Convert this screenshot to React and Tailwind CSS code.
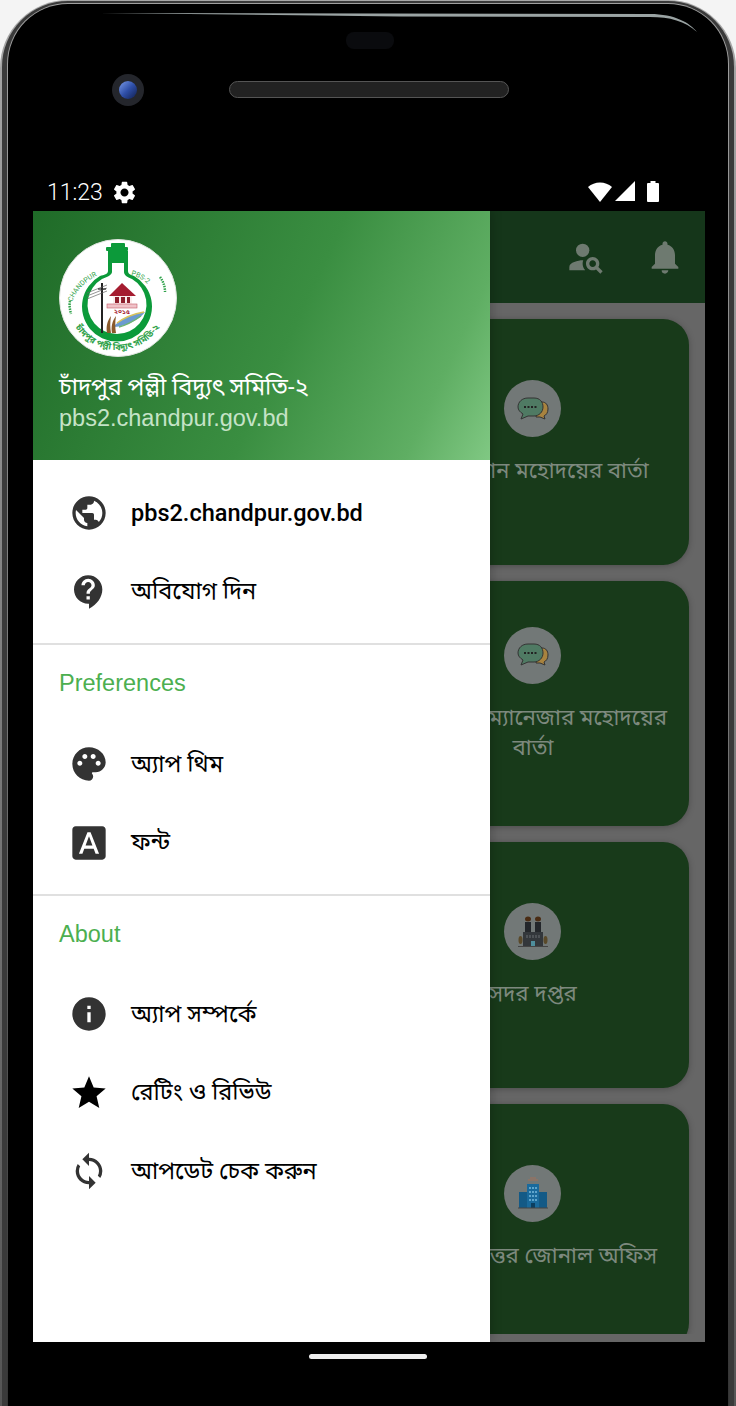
import { MdPublic, MdContactSupport, MdPalette, MdFontDownload, MdInfo, MdStar, MdSync, MdPersonSearch, MdNotifications, MdSettings } from "react-icons/md"

const font = "font-['Roboto','Noto_Sans','Noto_Sans_Bengali','Lohit_Bengali','FreeSerif',sans-serif]"

function Logo() {
    return (
        <svg viewBox="0 0 118 118" className="w-[118px] h-[118px] shrink-0">
            <circle cx="59" cy="59" r="58.5" fill="#fff" stroke="#dfe5df" strokeWidth="1" />
            <path id="logoL" d="M13 63 Q21 42 47 33" fill="none" />
            <path id="logoR" d="M72 36 Q86 39 95 53" fill="none" />
            <path id="logoB" d="M14 84 A50 50 0 0 0 103 84" fill="none" />
            {/* bulb */}
            <rect x="52" y="4" width="14" height="5" rx="1" fill="#0c9a3a" />
            <rect x="47" y="8" width="22" height="4" rx="1" fill="#0c9a3a" />
            <path d="M49 12h20v20c0 3 3 4 6 5a35 35 0 1 1-34 0c4-1 8-2 8-5z" fill="#0c9a3a" />
            <path d="M53 24h12v9c0 3 3 5 8 7a29.500 29.500 0 1 1-30 0c5-2 10-4 10-7z" fill="#fff" />
            {/* house */}
            <path d="M50 57 63 44 77 57z" fill="#a51c30" />
            <rect x="54" y="57" width="19" height="8" fill="#fbeeee" />
            <rect x="56" y="58" width="4" height="6" fill="#8e1e2c" />
            <rect x="62" y="58" width="4" height="6" fill="#8e1e2c" />
            <rect x="68" y="58" width="3" height="6" fill="#8e1e2c" />
            <rect x="48" y="65" width="30" height="4" fill="#f0c2c8" stroke="#c25a68" strokeWidth="0.6" />
            <text x="63" y="75" textAnchor="middle" fontSize="6.500" fontWeight="700" fill="#a51c30">২০১৫</text>
            {/* river and boat */}
            <path d="M54 88c6-7 18-13 32-15-2 3-5 5-8 7-6 4-14 8-24 8z" fill="#6a9ad0" />
            <path d="M58 84c8-6 16-9 27-11" stroke="#d9c35a" strokeWidth="1.500" fill="none" />
            <path d="M60 88c8-2 15-6 22-11" stroke="#6fb56f" strokeWidth="1.500" fill="none" />
            <path d="M53 94c-1-6 0-12 4-17-1 6-1 12 0 17z" fill="#8a5a2b" />
            <path d="M48 94c-1-6 0-12 4-17-1 6-1 12 0 17z" fill="#8a5a2b" />
            {/* pole and wires */}
            <rect x="42" y="44" width="2" height="50" fill="#222" />
            <path d="M28 54 48 46M28 57 48 49M28 60 48 52" stroke="#666" strokeWidth="0.700" />
            <path d="M39 50h8" stroke="#222" strokeWidth="1.200" />
            {/* ring lettering */}
            <text fontSize="7" fill="#2fa24a" fontFamily="Roboto"><textPath href="#logoL">CHANDPUR</textPath></text>
            <text fontSize="7" fill="#2fa24a" fontFamily="Roboto"><textPath href="#logoR">PBS-2</textPath></text>
            <text fontSize="9" fontWeight="700" fill="#2fa24a"><textPath href="#logoB" startOffset="5">চাঁদপুর পল্লী বিদ্যুৎ সমিতি-২</textPath></text>
            <path d="M11 62c-1 4 0 9 1 13" stroke="#2fa24a" strokeWidth="2.500" strokeDasharray="1.500 1" fill="none" />
            <path d="M101 38c3 4 5 9 5 15" stroke="#2fa24a" strokeWidth="2.500" strokeDasharray="1.500 1" fill="none" />
        </svg>
    )
}

function MenuItem({ icon, text, strong, dark }) {
    const Icon = icon
    return (
        <div className="flex items-center h-[78.5px] pl-[36px]">
            <Icon size={40} className={dark ? "text-black" : "text-[#333333]"} />
            <div className={`ml-[22px] text-[23.5px] text-black ${strong ? "font-medium" : ""}`}>{text}</div>
        </div>
    )
}

function SectionLabel({ text }) {
    return <div className="h-[57px] pl-[26px] flex items-center pt-[21px] text-[23.5px] leading-none text-[#4caf50] font-['Liberation_Sans']">{text}</div>
}

function Card({ two, children, icon }) {
    return (
        <div className={`h-[245.5px] w-[312px] shrink-0 rounded-[26px] bg-[#183a1a] flex flex-col items-center shadow-[0_1px_6px_rgba(0,0,0,0.25)] ${two ? "pt-[46px]" : "pt-[61px]"}`}>
            <div className="w-[57px] h-[57px] rounded-full bg-[#727877] flex items-center justify-center -ml-[1px]">{icon}</div>
            <div className="mt-[18px] text-[22.3px] leading-[30px] text-center text-[#7d897e]">{children}</div>
        </div>
    )
}

const chat = (
    <svg viewBox="0 0 32 24" className="w-[32px] h-[24px]">
        <path d="M20 5h5c4 0 6 3 6 7s-2 6-4 7l1 3-5-2h-4z" fill="#a8833f" stroke="#333" />
        <path d="M11 1h6c6 0 9 4 9 9s-4 9-9 9h-6l-7 3 2-5c-3-2-5-4-5-7 0-5 4-9 10-9z" fill="#4f7a63" stroke="#333" />
        <path d="M7 10h13" stroke="#222" strokeWidth="2" strokeDasharray="2 1.500" />
    </svg>
)

const hq = (
    <svg viewBox="0 0 30 32" className="w-[30px] h-[32px]">
        <rect x="7" y="6" width="6" height="24" fill="#23262a" />
        <rect x="17" y="6" width="6" height="24" fill="#23262a" />
        <rect x="5" y="16" width="20" height="14" fill="#33373b" />
        <path d="M9 19v3M12 19v3M15 19v3M18 19v3M21 19v3" stroke="#6b6f72" />
        <ellipse cx="10" cy="3" rx="3" ry="2.500" fill="#4a2c14" />
        <ellipse cx="20" cy="3" rx="3" ry="2.500" fill="#4a2c14" />
        <rect x="13" y="25" width="4" height="5" fill="#4f8e9c" />
        <ellipse cx="2.500" cy="24" rx="2" ry="4" fill="#5a4a2a" />
        <ellipse cx="27.500" cy="24" rx="2" ry="4" fill="#5a4a2a" />
        <path d="M0 30.500h30" stroke="#444" />
    </svg>
)

const office = (
    <svg viewBox="0 0 30 32" className="w-[30px] h-[32px]">
        <path d="M10 3h10M12 1h6" stroke="#a2705a" />
        <rect x="9" y="7" width="12" height="24" fill="#1a6a9c" />
        <rect x="1" y="15" width="8" height="16" fill="#145a86" />
        <rect x="21" y="15" width="8" height="16" fill="#145a86" />
        <path d="M11 11h8M11 15h8M11 19h8M11 23h8" stroke="#5fa5cc" strokeWidth="2" strokeDasharray="2 1" />
        <rect x="13" y="26" width="4" height="5" fill="#0c3f60" />
        <path d="M0 31h30" stroke="#444" />
    </svg>
)

function StatusBar() {
    return (
        <div className="flex items-center justify-between h-[40px] pl-[14px] pr-[46px] text-white">
            <div className="flex items-center">
                <span className="text-[23px] font-light font-['Roboto'] pt-[4px]">11:23</span>
                <MdSettings size={27} className="ml-[8px] mt-[2px]" />
            </div>
            <div className="flex items-center">
                <svg viewBox="0 0 24 21" className="w-[24px] h-[21px]"><path d="M0 6a18 18 0 0 1 24 0L12 21z" fill="#fff" /></svg>
                <svg viewBox="0 0 20 20" className="w-[20px] h-[20px] ml-[3px]"><path d="M20 0v20H0z" fill="#fff" /></svg>
                <svg viewBox="0 0 12 21" className="w-[12px] h-[21px] ml-[12px]"><path d="M3.500 0h5v2H11a1 1 0 0 1 1 1v17a1 1 0 0 1-1 1H1a1 1 0 0 1-1-1V3a1 1 0 0 1 1-1h2.500z" fill="#fff" /></svg>
            </div>
        </div>
    )
}

function App() {
    return (
        <div className={`w-[736px] h-[1406px] overflow-hidden bg-[#f4f4f4] ${font}`}>
            {/* phone body: metal rim, then the black glass */}
            <div className="h-full rounded-t-[68px] bg-gradient-to-b from-[#a8a8a8] to-[#555555] pt-[1px] px-[2px]">
                <div className="h-full rounded-t-[66px] bg-[#3a3a3a] pt-[2px] px-[5px]">
                    <div className="h-full rounded-t-[61px] bg-gradient-to-b from-[#a0a0a0] via-[#777777] to-[#333333] pt-[1px] px-[1px]">
                        <div className="relative h-full rounded-t-[60px] bg-black flex flex-col pl-[25px] pr-[23px]">
                            <svg viewBox="0 0 600 24" className="absolute top-[9px] left-[92px] w-[600px] h-[24px]">
                                <path d="M0 0 550 1C575 1 590 10 597 19 585 8 570 4 550 4L300 3.500z" fill="#9aa3a3" />
                            </svg>

                            <div className="h-[207px] flex flex-col">
                                <div className="self-center w-[48px] h-[17px] rounded-[8px] bg-[#0a0b0e] mt-[28px] ml-[2px]"></div>
                                <div className="flex items-center mt-[25px] ml-[79px]">
                                    <div className="w-[32px] h-[32px] rounded-full bg-[#24262c] flex items-center justify-center">
                                        <div className="w-[18px] h-[18px] rounded-full bg-gradient-to-br from-[#7d9cea] via-[#2f4fa8] to-[#101f50]"></div>
                                    </div>
                                    <div className="ml-[85px] w-[280px] h-[17px] -mt-[2px] rounded-full bg-[#222222] border border-[#555555]"></div>
                                </div>
                                <div className="mt-auto"><StatusBar /></div>
                            </div>

                            <div className="relative h-[1131px] bg-[#666666] overflow-hidden">
                                <div className="h-[92px] bg-[#15361a] flex items-center justify-end pr-[20px]">
                                    <MdPersonSearch size={40} className="text-[#6e7a70]" />
                                    <MdNotifications size={40} className="ml-[39px] text-[#6e7a70]" />
                                </div>
                                <div className="h-[1031px] overflow-hidden pt-[16px] pl-[344px] flex flex-col gap-[16px]">
                                    <Card icon={chat}>চেয়ারম্যান মহোদয়ের বার্তা</Card>
                                    <Card two icon={chat}>জেনারেল ম্যানেজার মহোদয়ের<br />বার্তা</Card>
                                    <Card icon={hq}>সদর দপ্তর</Card>
                                    <Card icon={office}>চাঁদপুর উত্তর জোনাল অফিস</Card>
                                </div>

                                {/* navigation drawer */}
                                <div className="absolute inset-y-0 left-0 w-[457px] bg-white shadow-[2px_0_10px_rgba(0,0,0,0.2)]">
                                    <div className="h-[249px] bg-[linear-gradient(115deg,#1f6b28_0%,#3a8e41_55%,#5fae63_85%,#80c883_100%)] pt-[28px] pl-[26px]">
                                        <Logo />
                                        <div className="mt-[15px] text-[23.5px] leading-[30px] text-white">চাঁদপুর পল্লী বিদ্যুৎ সমিতি-২</div>
                                        <div className="mt-[1px] text-[23.5px] leading-[30px] text-[#c5e3c7] font-['Liberation_Sans']">pbs2.chandpur.gov.bd</div>
                                    </div>
                                    <div className="pt-[14px] pb-[12px] border-b-2 border-[#e0e0e0]">
                                        <MenuItem icon={MdPublic} text="pbs2.chandpur.gov.bd" strong />
                                        <MenuItem icon={MdContactSupport} text="অবিযোগ দিন" />
                                    </div>
                                    <SectionLabel text="Preferences" />
                                    <div className="pt-[23px] pb-[12px] border-b-2 border-[#e0e0e0]">
                                        <MenuItem icon={MdPalette} text="অ্যাপ থিম" />
                                        <MenuItem icon={MdFontDownload} text="ফন্ট" />
                                    </div>
                                    <SectionLabel text="About" />
                                    <div className="pt-[22px]">
                                        <MenuItem icon={MdInfo} text="অ্যাপ সম্পর্কে" />
                                        <MenuItem icon={MdStar} text="রেটিং ও রিভিউ" dark />
                                        <MenuItem icon={MdSync} text="আপডেট চেক করুন" />
                                    </div>
                                </div>
                            </div>

                            <div className="flex-1 flex justify-center pt-[12px] pr-[2px]">
                                <div className="w-[118px] h-[5px] rounded-full bg-[#eeeeee]"></div>
                            </div>
                        </div>
                    </div>
                </div>
            </div>
        </div>
    )
}
export default App
